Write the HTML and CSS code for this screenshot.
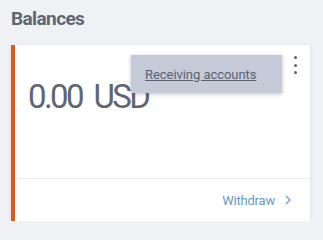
FILE: index.html
```html
<!DOCTYPE html>
<html>
<head>
<meta charset="utf-8">
<link rel="stylesheet" href="styles.css">
</head>
<body>
<h1 class="title">Balances</h1>
<div class="card">
  <div class="card-body">
    <div class="amount">0.00 USD</div>
    <button class="more" aria-label="More">
      <span class="dot"></span><span class="dot"></span><span class="dot"></span>
    </button>
    <div class="menu">
      <a class="menu-item" href="#">Receiving accounts</a>
    </div>
  </div>
  <div class="card-footer">
    <a class="withdraw" href="#">Withdraw
      <svg class="chev" width="6" height="10" viewBox="0 0 6 10"><path d="M1 1l4 4-4 4" fill="none" stroke="currentColor" stroke-width="1.2"/></svg>
    </a>
  </div>
</div>
</body>
</html>
```
FILE: styles.css
```css
html, body {
  margin: 0;
  padding: 0;
  background: #f0f1f5;
  font-family: Roboto, "Liberation Sans", sans-serif;
}
body {
  padding: 7px 13px 0 11px;
}
.title {
  margin: 0;
  font-size: 19px;
  line-height: 24px;
  font-weight: 700;
  color: #5e6673;
  letter-spacing: -0.6px;
}
.card {
  margin-top: 14px;
  width: 295px;
  height: 176px;
  background: #fff;
  border-left: 4px solid #e4561c;
  box-shadow: 0 1px 4px rgba(60, 70, 90, 0.12);
  display: flex;
  flex-direction: column;
}
.card-body {
  position: relative;
  flex: 1;
  border-bottom: 1px solid #eceef2;
  padding: 30px 0 0 13px;
}
.amount {
  font-size: 33px;
  line-height: 44px;
  color: #5f6673;
  letter-spacing: -2.6px;
  word-spacing: 6px;
}
.more {
  position: absolute;
  top: 11px;
  right: 11px;
  width: 8px;
  height: 18px;
  padding: 0;
  border: 0;
  background: none;
  display: flex;
  flex-direction: column;
  align-items: center;
  justify-content: space-between;
}
.dot {
  width: 3px;
  height: 3px;
  border-radius: 50%;
  background: #5d6470;
}
.menu {
  position: absolute;
  top: 10px;
  left: 116px;
  width: 151px;
  height: 38px;
  background: #c5cad9;
  box-shadow: 0 1px 4px rgba(40, 50, 70, 0.3);
  display: flex;
  align-items: center;
  padding-left: 14px;
  box-sizing: border-box;
}
.menu-item {
  font-size: 13px;
  color: #5a6271;
  text-decoration: underline;
  letter-spacing: -0.05px;
}
.card-footer {
  height: 42px;
  display: flex;
  align-items: center;
  justify-content: flex-end;
  padding-right: 19px;
}
.withdraw {
  font-size: 13px;
  color: #6a97c9;
  text-decoration: none;
  letter-spacing: -0.2px;
  display: flex;
  align-items: center;
  gap: 10px;
}
.chev {
  display: block;
}
```
